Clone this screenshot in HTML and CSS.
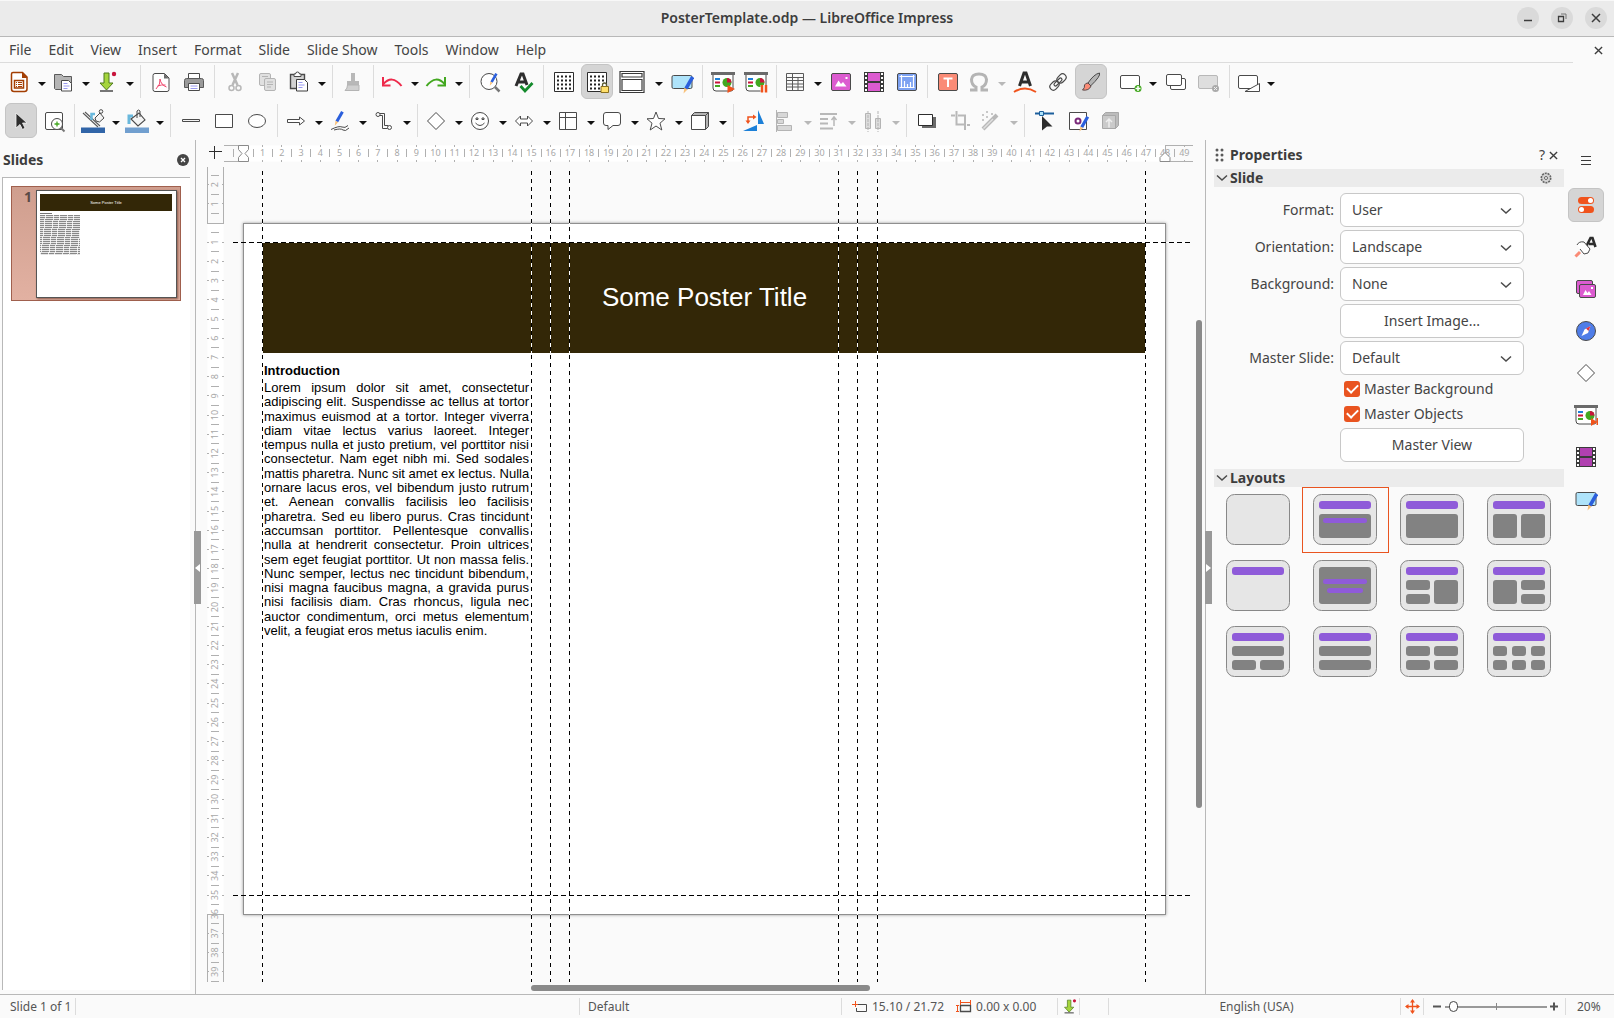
FILE: index.html
```html
<!DOCTYPE html>
<html lang="en">
<head>
<meta charset="utf-8">
<title>PosterTemplate.odp — LibreOffice Impress</title>
<link rel="stylesheet" href="styles.css">
</head>
<body>
<svg class="defs" width="0" height="0" aria-hidden="true">
  <symbol id="s-pencil" viewBox="0 0 14 20"><path d="M10.500 0 14 2 6.500 15 3 13z" fill="#2b5fdc"/><path d="M3 13l3.500 2L2 19.500z" fill="#f8c27c"/></symbol>
  <symbol id="s-chev" viewBox="0 0 12 8"><path d="M1 1.500l5 4.500 5-4.500" fill="none" stroke="#4a4a4a" stroke-width="1.500"/></symbol>
  <symbol id="s-x" viewBox="0 0 10 10"><path d="M1 1l8 8M9 1L1 9" fill="none" stroke="#3d3d3d" stroke-width="1.500"/></symbol>
  <symbol id="s-save" viewBox="0 0 24 24"><path d="M9 3h5v10h4l-6.500 7-6.500-7h4z" fill="#a5d53c" stroke="#4e7a1c"/><path d="M5 21h13" stroke="#4a4a4a" stroke-width="1.500"/><circle cx="19" cy="4" r="2.200" fill="#c8143c"/></symbol>
  <symbol id="s-show" viewBox="0 0 24 24"><path d="M2 4v14q0 3 3 3h15q2 0 2-2V4" fill="#fff" stroke="#4a4a4a"/><path d="M0 2h24v3H0z" fill="#6a6a6a"/><path d="M4 9h5" stroke="#1c80d8" stroke-width="2"/><path d="M4 12.500h5" stroke="#c8143c" stroke-width="2"/><path d="M4 16h5" stroke="#43a820" stroke-width="2"/><circle cx="16" cy="12.500" r="4.500" fill="#43a820"/><path d="M16 12.500V8a4.500 4.500 0 0 1 4.500 4.500z" fill="#c8143c"/></symbol>
  <symbol id="s-film" viewBox="0 0 24 24"><path d="M2 2h20v20H2z" fill="#3a3a3a"/><path d="M6 3h12v8H6zM6 13h12v8H6z" fill="var(--film)"/><path d="M4 3v19M20 3v19" stroke="#fff" stroke-width="2" stroke-dasharray="2 2"/></symbol>
  <symbol id="s-note" viewBox="0 0 24 24"><rect x="2" y="5.500" width="20" height="13" rx="1.500" fill="#aee3fa" stroke="#4a4a4a"/></symbol>
</svg>

<header class="titlebar">
  <h1>PosterTemplate.odp — LibreOffice Impress</h1>
  <div class="winbtns">
    <button aria-label="Minimize"><svg width="10" height="10"><path d="M1 7.500h8" stroke="#3d3d3d" stroke-width="1.500"/></svg></button>
    <button aria-label="Restore"><svg width="10" height="10"><path d="M1.500 3.500h5v5h-5z" fill="none" stroke="#3d3d3d" stroke-width="1.300"/><path d="M4 1h5v5" fill="none" stroke="#777"/></svg></button>
    <button aria-label="Close"><svg width="10" height="10"><use href="#s-x"/></svg></button>
  </div>
</header>

<nav class="menubar">
  <div class="menus">
    <button>File</button><button>Edit</button><button>View</button><button>Insert</button><button>Format</button><button>Slide</button><button>Slide Show</button><button>Tools</button><button>Window</button><button>Help</button>
  </div>
  <button class="docclose" aria-label="Close document"><svg width="9" height="9"><use href="#s-x"/></svg></button>
</nav>

<div class="toolbar">
  <span class="split"><button aria-label="New"><svg viewBox="0 0 24 24"><path d="M6 2.500h9.500l4.500 4.500V19q0 2.500-2.500 2.500H7Q4.500 21.500 4.500 19V4q0-1.500 1.500-1.500z" fill="#fff" stroke="#a33e03" stroke-width="1.500"/><path d="M15 2l5.500 6H15z" fill="#a33e03"/><path d="M7.500 10.500h9v7.500h-9z" fill="none" stroke="#a33e03" stroke-width="1.500"/><path d="M9 12.500h1M11 12.500h4M9 14.500h1M11 14.500h4M9 16.500h1M11 16.500h4" stroke="#a33e03"/></svg></button><button class="drop" aria-label="New options"></button></span>
  <span class="split"><button aria-label="Open"><svg viewBox="0 0 24 24"><path d="M3.500 18.500v-14h7l2 2h8v13h-16z" fill="#b4b4b4" stroke="#5a5a5a"/><path d="M10.500 10.500h7l3 3v7.500h-10z" fill="#fff" stroke="#4a4a4a"/><path d="M12.500 13.500h4M12.500 16h6M12.500 18.500h4" stroke="#9a9af0"/></svg></button><button class="drop" aria-label="Open options"></button></span>
  <span class="split"><button aria-label="Save"><svg viewBox="0 0 24 24"><use href="#s-save"/></svg></button><button class="drop" aria-label="Save options"></button></span>
  <i class="sep"></i>
  <button class="tb" aria-label="Export as PDF"><svg viewBox="0 0 24 24"><path d="M6 3.500h9.500l4.500 4.500v11.500q0 2-2 2H6q-2 0-2-2v-14q0-2 2-2z" fill="#fff" stroke="#4a4a4a"/><path d="M15 3.500V8.500h5z" fill="#6a6a6a"/><path d="M11 9q1 6 6.500 8M11 9q1 5-4 10M8.500 16q4-1.500 8-1" fill="none" stroke="#f0486e"/></svg></button>
  <button class="tb" aria-label="Print"><svg viewBox="0 0 24 24"><path d="M6.500 3.500h11v5h-11z" fill="#fff" stroke="#4a4a4a"/><path d="M2.500 10.500q0-2 2-2h15q2 0 2 2v7h-19z" fill="#9a9a9a" stroke="#5a5a5a"/><path d="M6.500 13.500h11v7h-11z" fill="#fff" stroke="#4a4a4a"/><path d="M8.500 16h7M8.500 18.500h7" stroke="#9a9af0"/></svg></button>
  <i class="sep"></i>
  <button class="tb" aria-label="Cut"><svg viewBox="0 0 24 24"><path d="M9 3l5.500 12M15 3L9.500 15" stroke="#b8b8b8" stroke-width="2.500" fill="none"/><circle cx="8.500" cy="18" r="2.500" fill="none" stroke="#b8b8b8" stroke-width="1.500"/><circle cx="15.500" cy="18" r="2.500" fill="none" stroke="#b8b8b8" stroke-width="1.500"/></svg></button>
  <button class="tb" aria-label="Copy"><svg viewBox="0 0 24 24"><g fill="#e0e0e0" stroke="#b4b4b4"><rect x="3.500" y="3.500" width="11" height="12" rx="1.500"/><rect x="8.500" y="8.500" width="11" height="12" rx="1.500"/></g><path d="M6 6.500h6M11 12h6M11 14.500h6M11 17h4" stroke="#b4b4b4"/></svg></button>
  <span class="split"><button aria-label="Paste"><svg viewBox="0 0 24 24"><path d="M3.500 4.500h14v14h-14z" fill="#d2d2d2" stroke="#4a4a4a" stroke-width="1.400"/><path d="M7 6.500V4h1.500q0-2 2-2t2 2H14v2.500z" fill="#fff" stroke="#4a4a4a"/><path d="M9.500 9.500h8l3 3v8.500h-11z" fill="#fff" stroke="#3a3a3a"/><path d="M11.500 12.500h4M11.500 15h6M11.500 17.500h4" stroke="#9a9af0"/></svg></button><button class="drop" aria-label="Paste options"></button></span>
  <i class="sep"></i>
  <button class="tb" aria-label="Clone formatting"><svg viewBox="0 0 24 24"><path d="M10 3h4v8h4v4H6v-4h4z" fill="#b8b8b8"/><path d="M6.500 15H18v5.500H4q2.500-2 2.500-5.500z" fill="#d0d0d0" stroke="#b4b4b4"/></svg></button>
  <i class="sep"></i>
  <span class="split"><button aria-label="Undo"><svg viewBox="0 0 24 24"><path d="M3 14.500Q12 4 21.500 16" fill="none" stroke="#ee2a4b" stroke-width="2"/><path d="M3 7v8.500H10.500" fill="none" stroke="#ee2a4b" stroke-width="2"/></svg></button><button class="drop" aria-label="Undo list"></button></span>
  <span class="split"><button aria-label="Redo"><svg viewBox="0 0 24 24"><path d="M21 14.500Q12 4 2.500 16" fill="none" stroke="#43a820" stroke-width="2"/><path d="M21 7v8.500H13.500" fill="none" stroke="#43a820" stroke-width="2"/></svg></button><button class="drop" aria-label="Redo list"></button></span>
  <i class="sep"></i>
  <button class="tb" aria-label="Find and replace"><svg viewBox="0 0 24 24"><circle cx="11" cy="11.500" r="8" fill="#fff" stroke="#4a4a4a"/><path d="M17 17l4.500 4.500" stroke="#777" stroke-width="2.500"/><use href="#s-pencil" x="9" y="3" width="12" height="13"/></svg></button>
  <button class="tb" aria-label="Spelling"><svg viewBox="0 0 24 24"><path d="M5 16L10 4h2l4 11M7 12h8" fill="none" stroke="#2d2d2d" stroke-width="3"/><path d="M9.500 16l4.500 5 7.500-8" fill="none" stroke="#148a2c" stroke-width="2.800"/></svg></button>
  <i class="sep"></i>
  <button class="tb" aria-label="Display grid"><svg viewBox="0 0 24 24"><path d="M2.500 2.500h19v19h-19z" fill="#fff" stroke="#2d2d2d"/><path d="M5 6.500h15M5 10.500h15M5 14.500h15M5 18.500h15" stroke="#222" stroke-width="2" stroke-dasharray="2 2"/></svg></button>
  <button class="tb on" aria-label="Snap to grid"><svg viewBox="0 0 24 24"><path d="M2.500 2.500h19v19h-19z" fill="#fff" stroke="#2d2d2d"/><path d="M5 6.500h15M5 10.500h15M5 14.500h12M5 18.500h11" stroke="#222" stroke-width="2" stroke-dasharray="2 2"/><path d="M17.500 17v-2q0-2 2-2t2 2v2" fill="none" stroke="#5a5a30" stroke-width="1.300"/><path d="M16 16.500h7.500v6H16z" fill="#ffdf6a" stroke="#8a7020"/></svg></button>
  <span class="split wide"><button aria-label="Display views"><svg viewBox="0 0 28 24"><path d="M2 1.500h24v21H2z" fill="#fff" stroke="#3a3a3a" stroke-width="1.200"/><path d="M4 3.500h20v3.500H4zM4 9.500h20v11H4z" fill="#fff" stroke="#3a3a3a" stroke-width="1.200"/></svg></button><button class="drop" aria-label="Views list"></button></span>
  <button class="tb" aria-label="Master slide"><svg viewBox="0 0 24 24"><use href="#s-note"/><use href="#s-pencil" x="11" y="6" width="14" height="18"/></svg></button>
  <i class="sep"></i>
  <button class="tb" aria-label="Start from first slide"><svg viewBox="0 0 24 24"><use href="#s-show"/><path d="M16.500 15l7.500 4-7.500 4z" fill="#f0531c"/></svg></button>
  <button class="tb" aria-label="Start from current slide"><svg viewBox="0 0 24 24"><use href="#s-show"/><path d="M16.500 15v8h6v-8z" fill="#fff"/><path d="M18 15v7.500M22 15v7.500" stroke="#f0531c" stroke-width="2.500"/></svg></button>
  <i class="sep"></i>
  <span class="split"><button aria-label="Table"><svg viewBox="0 0 24 24"><path d="M3.500 3.500h17v17h-17zM3.500 7.500h17M3.500 10.500h17M3.500 14h17M3.500 17h17M9.500 3.500v17M15 7.500v13" fill="none" stroke="#5a5a5a"/></svg></button><button class="drop" aria-label="Table size"></button></span>
  <button class="tb" aria-label="Insert image"><svg viewBox="0 0 24 24"><rect x="2.500" y="3.500" width="19" height="17" rx="1.500" fill="#dc5bd0" stroke="#4a4a4a"/><path d="M6 16.500l3.500-6 2.500 3.500 2-2 3.500 4.500zM16.500 7h2v2h-2z" fill="#fff"/></svg></button>
  <button class="tb film" aria-label="Insert audio or video"><svg viewBox="0 0 24 24"><use href="#s-film"/></svg></button>
  <button class="tb" aria-label="Insert chart"><svg viewBox="0 0 24 24"><rect x="2.500" y="3.500" width="19" height="17" rx="1.500" fill="#7da2f2" stroke="#4a4a4a"/><path d="M6.500 5v13M4.500 6.500h15M4.500 17.500h15M18.500 5v13M9.500 17v-6M12.500 17v-3M15.500 17v-5" fill="none" stroke="#fff" stroke-width="1.200"/></svg></button>
  <i class="sep"></i>
  <button class="tb" aria-label="Insert text box"><svg viewBox="0 0 24 24"><rect x="2.500" y="3.500" width="19" height="17" rx="1.500" fill="#fa8b76" stroke="#4a4a4a"/><path d="M7.500 8.500h9M12 8v9" stroke="#fff" stroke-width="2"/></svg></button>
  <span class="split off"><button aria-label="Special character"><svg viewBox="0 0 24 24"><path d="M3 20h6v-3Q4.500 15 4.500 9.500 5 4 12 4t7.500 5.500Q19.500 15 15 17v3h6" fill="none" stroke="#b4b4b4" stroke-width="3"/></svg></button><button class="drop" aria-label="Character list"></button></span>
  <button class="tb" aria-label="Fontwork"><svg viewBox="0 0 24 24"><path d="M6.500 16L11 3h2l4.500 13M8.500 12h7" fill="none" stroke="#2d2d2d" stroke-width="3"/><path d="M1 22q11-7 22 0" fill="none" stroke="#f0531c" stroke-width="2"/></svg></button>
  <button class="tb" aria-label="Hyperlink"><svg viewBox="0 0 24 24"><g fill="none" stroke="#4a4a4a" stroke-width="1.200" transform="rotate(-45 12 12)"><rect x="2" y="8.500" width="10" height="7" rx="3.500"/><rect x="12" y="8.500" width="10" height="7" rx="3.500"/><rect x="7" y="10.500" width="10" height="3" rx="1.500"/></g></svg></button>
  <button class="tb on" aria-label="Show draw functions"><svg viewBox="0 0 24 24"><path d="M9 13Q15 4 20.500 3q1.500 3-9 13z" fill="#b4b4b4" stroke="#4a4a4a"/><path d="M9 13l3 3q-2 5-8.500 4 2.500-2 2-5 1-2 3.500-2z" fill="#fa8b76" stroke="#5a4a4a"/></svg></button>
  <i class="gapsep"></i>
  <span class="split"><button aria-label="New slide"><svg viewBox="0 0 24 24"><rect x="2.500" y="5.500" width="19" height="13" rx="1.500" fill="#fff" stroke="#4a4a4a"/><circle cx="20" cy="18.500" r="3.500" fill="#43a820"/><path d="M17.500 18.500h5M20 16v5" stroke="#fff" stroke-width="1.500"/></svg></button><button class="drop" aria-label="New slide layout"></button></span>
  <button class="tb" aria-label="Duplicate slide"><svg viewBox="0 0 24 24"><g fill="#fff" stroke="#4a4a4a"><rect x="6.500" y="8.500" width="15" height="11" rx="1.500"/><rect x="2.500" y="4.500" width="15" height="11" rx="1.500"/></g></svg></button>
  <button class="tb" aria-label="Delete slide"><svg viewBox="0 0 24 24"><rect x="1.500" y="5.500" width="19" height="13" rx="1.500" fill="#dedede" stroke="#b8b8b8"/><circle cx="18.500" cy="18.500" r="3.500" fill="#aaa"/><path d="M17 17l3 3M20 17l-3 3" stroke="#eee"/></svg></button>
  <i class="sep"></i>
  <span class="split"><button aria-label="Slide layout"><svg viewBox="0 0 24 24"><rect x="2.500" y="5.500" width="19" height="13" rx="1.500" fill="#fff" stroke="#4a4a4a"/><path d="M9 21.500h14.500v-8z" fill="#fff" stroke="#4a4a4a"/></svg></button><button class="drop" aria-label="Layout list"></button></span>
</div>

<div class="toolbar second">
  <button class="tb on" aria-label="Select"><svg viewBox="0 0 24 24"><path d="M7 4v15l4-3.500 2.500 5 2.500-1.500-2.500-5h4.500z" fill="#2d2d2d" stroke="#f5f5f5" stroke-width=".8"/></svg></button>
  <button class="tb" aria-label="Zoom and pan"><svg viewBox="0 0 24 24"><rect x="3.500" y="3.500" width="17" height="17" rx="1.500" fill="#fff" stroke="#4a4a4a"/><path d="M18.500 18.500l4 4" stroke="#777" stroke-width="2"/><circle cx="15" cy="15" r="5.500" fill="#fff" stroke="#4a4a4a"/><path d="M12.500 15h5M15 12.500v5" stroke="#43a820" stroke-width="1.300"/></svg></button>
  <i class="sep"></i>
  <span class="split"><button aria-label="Line color"><svg viewBox="0 0 24 24"><path d="M2 4l15 14M4 3l15 14" stroke="#5a5a5a" stroke-width="1.100"/><path d="M10.500 11V5h3.500" fill="none" stroke="#69b8dc" stroke-width="2.500"/><path d="M14 9l5-5 4 5-4.500 4-3.500-1z" fill="#f4f4f4" stroke="#4a4a4a"/><circle cx="20" cy="2.500" r="1.800" fill="none" stroke="#4a4a4a"/><path d="M0 18.500h24v5.500H0z" fill="#3165a8"/></svg></button><button class="drop" aria-label="Line colors"></button></span>
  <span class="split"><button aria-label="Fill color"><svg viewBox="0 0 24 24"><path d="M4 15V7h4" fill="none" stroke="#69b8dc" stroke-width="3"/><path d="M6 10l8-6 6 7-7 6z" fill="#f4f4f4" stroke="#4a4a4a" stroke-width="1.100"/><path d="M12 9V2q1.500-2 3 0v6" fill="none" stroke="#4a4a4a"/><path d="M0 18.500h24v5.500H0z" fill="#719fcf"/></svg></button><button class="drop" aria-label="Fill colors"></button></span>
  <i class="sep"></i>
  <button class="tb" aria-label="Insert line"><svg viewBox="0 0 24 24"><path d="M3.500 10.500h17v2h-17z" fill="#f4f4f4" stroke="#4a4a4a"/></svg></button>
  <button class="tb" aria-label="Rectangle"><svg viewBox="0 0 24 24"><path d="M3.500 5.500h17v13h-17z" fill="#fff" stroke="#4a4a4a"/></svg></button>
  <button class="tb" aria-label="Ellipse"><svg viewBox="0 0 24 24"><ellipse cx="12" cy="12" rx="8.500" ry="6.500" fill="#fff" stroke="#4a4a4a"/></svg></button>
  <i class="sep"></i>
  <span class="split"><button aria-label="Lines and arrows"><svg viewBox="0 0 24 24"><path d="M3.500 10.500h12V8l5 4-5 4v-2.500h-12z" fill="#fff" stroke="#4a4a4a"/></svg></button><button class="drop" aria-label="Arrow list"></button></span>
  <span class="split"><button aria-label="Curves and polygons"><svg viewBox="0 0 24 24"><use href="#s-pencil" x="3" y="2" width="15" height="15"/><path d="M3 20.500q8-4 11-2.500t6-1.500M6 21q7-2 9 0t6-2" fill="none" stroke="#4a4a4a"/></svg></button><button class="drop" aria-label="Curve list"></button></span>
  <span class="split"><button aria-label="Connectors"><svg viewBox="0 0 24 24"><circle cx="6" cy="5.500" r="2" fill="none" stroke="#4a4a4a"/><circle cx="17.500" cy="18.500" r="2" fill="none" stroke="#4a4a4a"/><path d="M8 4.500h4.500v12h3.500M8 6.500h2.500v13h5" fill="none" stroke="#4a4a4a"/></svg></button><button class="drop" aria-label="Connector list"></button></span>
  <i class="sep"></i>
  <span class="split"><button aria-label="Basic shapes"><svg viewBox="0 0 24 24"><path d="M12 3.500l8.500 8.500-8.500 8.500L3.500 12z" fill="#fff" stroke="#4a4a4a"/></svg></button><button class="drop" aria-label="Basic shape list"></button></span>
  <span class="split"><button aria-label="Symbol shapes"><svg viewBox="0 0 24 24"><circle cx="12" cy="12" r="8.500" fill="#fff" stroke="#4a4a4a"/><path d="M8 9h2v1.500H8zM14 9h2v1.500h-2z" fill="none" stroke="#4a4a4a"/><path d="M7.500 14q4.500 5 9 0" fill="none" stroke="#4a4a4a"/></svg></button><button class="drop" aria-label="Symbol shape list"></button></span>
  <span class="split"><button aria-label="Block arrows"><svg viewBox="0 0 24 24"><path d="M3.500 12l5-5v3h7V7l5 5-5 5v-3h-7v3z" fill="#fff" stroke="#4a4a4a"/></svg></button><button class="drop" aria-label="Block arrow list"></button></span>
  <span class="split"><button aria-label="Flowchart"><svg viewBox="0 0 24 24"><path d="M3.500 3.500h17v17h-17zM9.500 3.500v17M3.500 8.500h17" fill="#fff" stroke="#4a4a4a"/></svg></button><button class="drop" aria-label="Flowchart list"></button></span>
  <span class="split"><button aria-label="Callouts"><svg viewBox="0 0 24 24"><path d="M6 3.500h12q2.500 0 2.500 2.500v8q0 2.500-2.500 2.500h-5l-5 4v-4H6q-2.500 0-2.500-2.500V6q0-2.500 2.500-2.500z" fill="#fff" stroke="#4a4a4a"/></svg></button><button class="drop" aria-label="Callout list"></button></span>
  <span class="split"><button aria-label="Stars and banners"><svg viewBox="0 0 24 24"><path d="M12 3l2.500 6.500 6.500.300-5 4.400 1.800 6.800L12 17l-5.800 4L8 14.200 3 9.800l6.500-.300z" fill="#fff" stroke="#4a4a4a"/></svg></button><button class="drop" aria-label="Star list"></button></span>
  <span class="split"><button aria-label="3D objects"><svg viewBox="0 0 24 24"><path d="M3.500 6.500l3-3h14v14l-3 3z" fill="#b4b4b4" stroke="#4a4a4a"/><path d="M3.500 6.500h14v14h-14z" fill="#fff" stroke="#4a4a4a"/><path d="M17.500 6.500l3-3" stroke="#4a4a4a"/></svg></button><button class="drop" aria-label="3D object list"></button></span>
  <i class="sep"></i>
  <button class="tb" aria-label="Rotate"><svg viewBox="0 0 24 24"><path d="M16 1l6 14h-6zM1 22l14-6v6z" fill="#1c80d8"/><path d="M6 13V8h7" fill="none" stroke="#f0531c" stroke-width="1.500"/><path d="M3.500 11.500h5L6 15zM11 5.500v5l3.500-2.500z" fill="#f0531c"/></svg></button>
  <span class="split off"><button aria-label="Align objects"><svg viewBox="0 0 24 24"><path d="M3.500 1v22" stroke="#b4b4b4"/><path d="M4.500 3.500h10v5h-10zM4.500 10.500h6v4h-6zM4.500 16.500h14v5h-14z" fill="#d8d8d8" stroke="#b4b4b4"/></svg></button><button class="drop" aria-label="Align list"></button></span>
  <span class="split off"><button aria-label="Arrange"><svg viewBox="0 0 24 24"><path d="M3 5h17M3 10h8M3 14.500h8M3 19.500h13" stroke="#b8b8b8" stroke-width="2"/><path d="M17 17V9M14.500 11l2.500-3 2.500 3" fill="none" stroke="#b8b8b8" stroke-width="1.500"/></svg></button><button class="drop" aria-label="Arrange list"></button></span>
  <span class="split off"><button aria-label="Distribute"><svg viewBox="0 0 24 24"><path d="M4.500 4.500h5v15h-5zM14.500 9.500h5v10h-5z" fill="#dcdcdc" stroke="#b4b4b4"/><path d="M7 2v21M17 2v21" stroke="#b4b4b4" stroke-dasharray="3 1"/></svg></button><button class="drop" aria-label="Distribute list"></button></span>
  <i class="sep"></i>
  <button class="tb" aria-label="Shadow"><svg viewBox="0 0 24 24"><path d="M7 8h14v11H7z" fill="#6a6a6a"/><path d="M3.500 5.500h14v11h-14z" fill="#fff" stroke="#2d2d2d"/></svg></button>
  <button class="tb" aria-label="Crop image"><svg viewBox="0 0 24 24"><path d="M3 6.500h4M8.500 2v13.500h9M10 6.500h7V21M19 16h3" fill="none" stroke="#b8b8b8" stroke-width="2"/></svg></button>
  <span class="split off"><button aria-label="Filter"><svg viewBox="0 0 24 24"><path d="M4 20L18 6" stroke="#b8b8b8" stroke-width="4"/><path d="M4.500 19.500L14 10" stroke="#e0e0e0" stroke-width="1.500"/><path d="M3 6h2M7 3h2M7 8h2M12 5h2M3 11h2" stroke="#b8b8b8" stroke-width="1.500"/></svg></button><button class="drop" aria-label="Filter list"></button></span>
  <i class="sep"></i>
  <button class="tb" aria-label="Edit points"><svg viewBox="0 0 24 24"><path d="M2 4.500h19" stroke="#1c5f9c" stroke-width="2"/><path d="M6.500 2.500h4v4h-4z" fill="#aee3fa" stroke="#1c5f9c"/><path d="M9 7l10.500 10.500h-5.500l-5 4z" fill="#2d2d2d"/></svg></button>
  <button class="tb" aria-label="Glue points"><svg viewBox="0 0 24 24"><path d="M3.500 3.500h17v17h-17z" fill="#fff" stroke="#4a4a4a"/><circle cx="12" cy="12" r="2.500" fill="none" stroke="#7a2a7a" stroke-width="2"/><use href="#s-pencil" x="11" y="7" width="13" height="16"/></svg></button>
  <button class="tb" aria-label="Toggle extrusion"><svg viewBox="0 0 24 24"><path d="M3.500 6.500l3-3h13v13l-3 3z" fill="#bcbcbc" stroke="#a8a8a8"/><path d="M3.500 6.500h13v13h-13z" fill="#cacaca" stroke="#a8a8a8"/><path d="M10 18.500v-8M7 13l3-3 3 3" fill="none" stroke="#eee" stroke-width="1.500"/></svg></button>
</div>

<main class="workarea">
  <aside class="slides">
    <div class="slides-head"><h2>Slides</h2><button aria-label="Close pane"><svg width="12" height="12"><circle cx="6" cy="6" r="6" fill="#454545"/><path d="M4 4l4 4M8 4l-4 4" stroke="#fff" stroke-width="1.300"/></svg></button></div>
    <div class="slide-list">
      <div class="thumb"><span class="num">1</span>
        <div class="mini"><div class="mini-title">Some Poster Title</div><div class="mini-h"></div><div class="mini-body"></div></div>
      </div>
    </div>
    <button class="grip left" aria-label="Hide slide pane"></button>
  </aside>

  <section class="editor">
    <svg class="corner" width="13" height="13"><path d="M0 5.500h13M5.500 0v13" stroke="#2d2d2d"/></svg>
    <svg class="hruler" id="hruler"></svg>
    <svg class="vruler" id="vruler"></svg>
    <div class="canvas">
      <article class="page">
        <h2 class="poster-title">Some Poster Title</h2>
        <div class="column">
          <h3>Introduction</h3>
          <p>
            <span>Lorem ipsum dolor sit amet, consectetur</span>
            <span>adipiscing elit. Suspendisse ac tellus at tortor</span>
            <span>maximus euismod at a tortor. Integer viverra</span>
            <span>diam vitae lectus varius laoreet. Integer</span>
            <span>tempus nulla et justo pretium, vel porttitor nisi</span>
            <span>consectetur. Nam eget nibh mi. Sed sodales</span>
            <span>mattis pharetra. Nunc sit amet ex lectus. Nulla</span>
            <span>ornare lacus eros, vel bibendum justo rutrum</span>
            <span>et. Aenean convallis facilisis leo facilisis</span>
            <span>pharetra. Sed eu libero purus. Cras tincidunt</span>
            <span>accumsan porttitor. Pellentesque convallis</span>
            <span>nulla at hendrerit consectetur. Proin ultrices</span>
            <span>sem eget feugiat porttitor. Ut non massa felis.</span>
            <span>Nunc semper, lectus nec tincidunt bibendum,</span>
            <span>nisi magna faucibus magna, a gravida purus</span>
            <span>nisi facilisis diam. Cras rhoncus, ligula nec</span>
            <span>auctor condimentum, orci metus elementum</span>
            <span>velit, a feugiat eros metus iaculis enim.</span>
          </p>
        </div>
      </article>
      <i class="guide v" style="left:38px"></i>
      <i class="guide v" style="left:307px"></i>
      <i class="guide v" style="left:326px"></i>
      <i class="guide v" style="left:345px"></i>
      <i class="guide v" style="left:614px"></i>
      <i class="guide v" style="left:633px"></i>
      <i class="guide v" style="left:653px"></i>
      <i class="guide v" style="left:921px"></i>
      <i class="guide h" style="top:80px"></i>
      <i class="guide h" style="top:733px"></i>
    </div>
    <div class="vscroll"><i></i></div>
    <div class="hscroll"><i></i></div>
  </section>

  <aside class="sidebar">
    <button class="grip right" aria-label="Hide sidebar"></button>
    <div class="deck">
      <div class="deck-head">
        <svg width="9" height="15"><g fill="#5a5a5a"><circle cx="2" cy="2" r="1.500"/><circle cx="7" cy="2" r="1.500"/><circle cx="2" cy="7" r="1.500"/><circle cx="7" cy="7" r="1.500"/><circle cx="2" cy="12" r="1.500"/><circle cx="7" cy="12" r="1.500"/></g></svg>
        <h2>Properties</h2>
        <button>?</button>
        <button aria-label="Close sidebar"><svg width="9" height="9"><use href="#s-x"/></svg></button>
      </div>
      <div class="bar"><svg width="12" height="8"><use href="#s-chev"/></svg><h3>Slide</h3><button aria-label="More options"><svg width="12" height="12" viewBox="0 0 12 12"><circle cx="6" cy="6" r="4.700" fill="#d4d4d4" stroke="#666" stroke-width="1.600" stroke-dasharray="2 .9"/><circle cx="6" cy="6" r="1.500" fill="#fff" stroke="#666"/></svg></button></div>
      <form class="props">
        <label for="format">Format:</label>
        <div class="sel"><select id="format"><option>User</option></select><svg width="12" height="8"><use href="#s-chev"/></svg></div>
        <label for="orient">Orientation:</label>
        <div class="sel"><select id="orient"><option>Landscape</option></select><svg width="12" height="8"><use href="#s-chev"/></svg></div>
        <label for="bg">Background:</label>
        <div class="sel"><select id="bg"><option>None</option></select><svg width="12" height="8"><use href="#s-chev"/></svg></div>
        <button type="button" class="push">Insert Image...</button>
        <label for="master">Master Slide:</label>
        <div class="sel"><select id="master"><option>Default</option></select><svg width="12" height="8"><use href="#s-chev"/></svg></div>
        <div class="checks">
          <label><input type="checkbox" checked>Master Background</label>
          <label><input type="checkbox" checked>Master Objects</label>
        </div>
        <button type="button" class="push">Master View</button>
      </form>
      <div class="bar"><svg width="12" height="8"><use href="#s-chev"/></svg><h3>Layouts</h3></div>
      <div class="layouts" id="layouts"></div>
    </div>
    <div class="tabs">
      <button class="menu" aria-label="Sidebar settings"><svg width="12" height="12"><path d="M1 2.500h10M1 6.500h10M1 10.500h10" stroke="#3a3a3a"/></svg></button>
      <button class="on" aria-label="Properties"><svg viewBox="0 0 24 24"><rect x="4" y="4" width="16" height="7" rx="3.500" fill="#f0531c"/><rect x="4" y="13" width="16" height="7" rx="3.500" fill="#f0531c"/><circle cx="16.500" cy="7.500" r="2.500" fill="#fff"/><circle cx="7.500" cy="16.500" r="2.500" fill="#fff"/></svg></button>
      <button aria-label="Styles"><svg viewBox="0 0 24 24"><path d="M12 12L16.500 3h2l3 9M15 9h6" fill="none" stroke="#2d2d2d" stroke-width="2.600"/><path d="M3 10q2-4 7-3l6 7-2 4-4 1-4-5" fill="#fff" stroke="#4a4a4a"/><path d="M1.500 21.500L6 17" stroke="#fa8b76" stroke-width="3"/></svg></button>
      <button aria-label="Gallery"><svg viewBox="0 0 24 24"><rect x="2.500" y="3.500" width="16" height="13" rx="1.500" fill="#dc5bd0" stroke="#4a4a4a"/><rect x="5.500" y="7.500" width="16" height="13" rx="1.500" fill="#dc5bd0" stroke="#4a4a4a"/><path d="M9 18l2.500-5 2 3 1.500-2 2.500 4zM17 10h2v2h-2z" fill="#fff"/></svg></button>
      <button aria-label="Navigator"><svg viewBox="0 0 24 24"><circle cx="12" cy="12" r="9.500" fill="#4f7de8" stroke="#4a4a4a"/><path d="M16.500 7l-2.500 7-6.500 3 3-6.500z" fill="#fff"/><path d="M16.500 7l-2 5-2.500-2.500z" fill="#e03040"/></svg></button>
      <button aria-label="Shapes"><svg viewBox="0 0 24 24"><path d="M12 3.500l8.500 8.500-8.500 8.500L3.500 12z" fill="#fff" stroke="#4a4a4a"/></svg></button>
      <button aria-label="Slide transition"><svg viewBox="0 0 24 24"><use href="#s-show"/><path d="M17 15l6 4-6 4zM22.500 15h1.500v7h-1.500z" fill="#f0531c"/></svg></button>
      <button class="anim" aria-label="Animation"><svg viewBox="0 0 24 24"><use href="#s-film"/></svg></button>
      <button aria-label="Master slides"><svg viewBox="0 0 24 24"><use href="#s-note"/><use href="#s-pencil" x="11" y="6" width="14" height="18"/></svg></button>
    </div>
  </aside>
</main>

<footer class="status">
  <span class="s-slide">Slide 1 of 1</span>
  <span class="s-blank"></span>
  <span class="s-master">Default</span>
  <span class="s-pos"><svg width="16" height="14"><path d="M5 4.500h9.500v7h-10V8" fill="none" stroke="#4a4a4a"/><path d="M0 4.500h6M3.500 1v6" stroke="#f0531c"/></svg>15.10 / 21.72<svg class="size" width="16" height="14"><path d="M4.500 5.500h10v6h-10z" fill="none" stroke="#4a4a4a" stroke-width="1.300"/><path d="M4 2.500h11M4.500 0v5M14.500 0v5M1.500 5v7M0 5.500h3M0 11.500h3" stroke="#f0531c"/></svg>0.00 x 0.00</span>
  <span class="s-save"><svg width="17" height="17"><use href="#s-save"/></svg></span>
  <span class="s-sign"></span>
  <span class="s-lang">English (USA)</span>
  <span class="s-fit"><svg width="15" height="15" viewBox="0 0 15 15"><path d="M7.500 1v13M1 7.500h13" stroke="#f0531c" stroke-width="1.300"/><path d="M5 3.500L7.500 0 10 3.500zM5 11.500L7.500 15l2.500-3.500zM3.500 5L0 7.500 3.500 10zM11.500 5L15 7.500 11.500 10z" fill="#f0531c"/></svg></span>
  <span class="s-zoom"><button aria-label="Zoom out"><svg width="9" height="9"><path d="M0 4.500h8" stroke="#555" stroke-width="2"/></svg></button><input type="range" min="0" max="100" value="4" aria-label="Zoom"><button aria-label="Zoom in"><svg width="9" height="9"><path d="M0 4.500h8M4 .5v8" stroke="#555" stroke-width="2"/></svg></button></span>
  <span class="s-pct">20%</span>
</footer>
<script src="app.js"></script>
</body>
</html>
```

FILE: styles.css
```css
* { box-sizing: border-box; }
html, body { height: 100%; }
body {
  margin: 0;
  display: flex;
  flex-direction: column;
  background: #fafafa;
  color: #444;
  font: 14px/18px "Noto Sans", "Open Sans", sans-serif;
  overflow: hidden;
}
h1, h2, h3, p { margin: 0; }
button {
  padding: 0;
  border: 0;
  background: none;
  color: inherit;
  font: inherit;
  display: flex;
  align-items: center;
  justify-content: center;
}
svg { display: block; flex: none; }
.defs { position: absolute; }

/* window frame */
.titlebar {
  flex: none;
  height: 37px;
  display: grid;
  grid-template-columns: 1fr auto 1fr;
  align-items: center;
  background: #ebebeb;
  border-top: 1px solid #f8f8f8;
  border-bottom: 1px solid #b8b8b8;
}
.titlebar h1 { grid-column: 2; font-size: 14px; font-weight: 600; color: #3d3d3d; padding-bottom: 2px; }
.winbtns { display: flex; justify-content: flex-end; gap: 12px; padding: 0 7px 1px 0; }
.winbtns button { width: 22px; height: 22px; border-radius: 50%; background: #dadada; }
.menubar { flex: none; height: 26px; display: flex; }
.menus { flex: 1; display: flex; gap: 17px; padding-left: 9px; border-bottom: 1px solid #dcdcdc; }
.docclose { width: 41px; padding-left: 9px; }

/* toolbars */
.toolbar { flex: none; height: 39px; display: flex; gap: 1px; padding: 1px 5px; }
.toolbar.second { height: 38px; }
.toolbar svg { width: 24px; height: 24px; }
.tb { width: 32px; height: 35px; border: 1px solid transparent; border-radius: 6px; }
.tb.on, .tabs .on { background: #d5d5d5; border: 1px solid #c4c4c4; }
.split { display: flex; width: 43px; height: 35px; }
.split button { width: 28px; }
.split .drop { width: 17px; margin-right: -2px; }
.drop::after { content: ""; border: 4px solid transparent; border-top-color: #111; border-bottom: 0; margin-top: 4px; }
.split.off .drop::after { border-top-color: #b8b8b8; }
.split.wide { width: 51px; }
.split.wide button { width: 36px; }
.split.wide .drop { width: 17px; }
.split.wide svg { width: 28px; }
.sep { width: 7px; height: 33px; margin-top: 1px; background: linear-gradient(#dcdcdc, #dcdcdc) center / 1px 100% no-repeat; }
.gapsep { width: 7px; }
.film { --film: #dc5bd0; }
.anim { --film: #b040b0; }

/* work area */
.workarea { flex: 1; min-height: 0; display: flex; border-bottom: 1px solid #b8b8b8; }
.slides {
  position: relative;
  width: 196px;
  flex: none;
  display: flex;
  flex-direction: column;
  padding: 2px 5px 4px 2px;
  border-right: 1px solid #b8b8b8;
}
.slides-head { height: 35px; display: flex; align-items: center; justify-content: space-between; padding: 0 1px; }
.slides-head h2, .deck-head h2, .bar h3 { font-size: 14px; font-weight: 700; color: #3d3d3d; }
.slide-list { flex: 1; background: #fff; border: solid #b8b8b8; border-width: 1px 0 0 1px; padding: 8px; }
.thumb {
  display: flex;
  width: 170px;
  height: 115px;
  padding: 3px;
  border: 1px solid #a0604e;
  background: linear-gradient(#cf9e8e, #e2b1a2);
}
.num { width: 21px; text-align: right; font-weight: 700; color: #5a4a46; padding-right: 4px; line-height: 14px; }
.mini { width: 141px; height: 108px; background: #fff; border: 1px solid #555; padding: 3px; box-shadow: 1px 1px 2px #8a5a4c; }
.mini-title { width: 132px; height: 17px; background: #332707; color: #fff; font: 4px/17px "Liberation Sans", Arial, sans-serif; text-align: center; }
.mini-h { width: 12px; height: 1px; margin: 2px 0 1px; background: #777; }
.mini-body { width: 40px; height: 40px; background: repeating-linear-gradient(97deg, transparent 0 5px, rgba(255,255,255,.8) 5px 6px, transparent 6px 13px, rgba(255,255,255,.8) 13px 14px), repeating-linear-gradient(#888 0 1px, #e4e4e4 1px 2px); }
.grip { position: absolute; top: 50%; width: 7px; height: 73px; margin-top: -36px; background: #999; }
.grip.left { right: -6px; }
.grip.right { left: -1px; }
.grip::after { content: ""; border: 4px solid transparent; }
.grip.left::after { border-left: 0; border-right: 5px solid #fff; }
.grip.right::after { border-right: 0; border-left: 5px solid #fff; }

.editor {
  flex: 1;
  min-width: 0;
  display: grid;
  grid-template-columns: 17px minmax(0, 1fr) 6px;
  grid-template-rows: 17px minmax(0, 1fr) 6px;
  padding: 5px 3px 3px 11px;
}
.corner { margin: 1px 0 0 2px; }
.hruler, .vruler { width: 100%; height: 100%; font: 9px "Noto Sans", sans-serif; }
.hruler { padding-right: 3px; grid-area: 1 / 2; }
.vruler { padding: 5px 0 3px; grid-area: 2 / 1; }
.canvas { grid-area: 2 / 2; position: relative; overflow: hidden; margin: 0 3px 3px 0; }
.vscroll { grid-area: 2 / 3; display: flex; flex-direction: column; padding: 158px 0 177px; }
.hscroll { grid-area: 3 / 2; display: flex; padding: 0 326px 0 307px; }
.vscroll i, .hscroll i { flex: 1; background: #8a8a8a; border-radius: 3px; }
.page {
  position: absolute;
  left: 19px;
  top: 61px;
  width: 923px;
  height: 692px;
  padding: 19px 19px 0 19px;
  background: #fff;
  border: 1px solid #8f8f8f;
  box-shadow: 0 0 3px #999;
  color: #000;
  font: 13px "Liberation Sans", Arial, sans-serif;
}
.poster-title {
  height: 110px;
  background: #332707;
  color: #fff;
  font-size: 26px;
  line-height: 109px;
  font-weight: 400;
  text-align: center;
}
.column { width: 266px; padding: 11px 0 0 1px; }
.column h3 { font-size: 13px; line-height: 14px; }
.column p { margin-top: 3px; line-height: 1.1; }
.column span { display: block; white-space: nowrap; text-align: justify; text-align-last: justify; }
.column span:last-child { text-align-last: left; }
.guide { position: absolute; }
.guide.v { top: 9px; bottom: 0; width: 1px; background: repeating-linear-gradient(#000 0 4px, #fff 4px 8px); }
.guide.h { left: 9px; right: 3px; height: 1px; background: repeating-linear-gradient(90deg, #000 0 5px, #fff 5px 8px); }

/* sidebar */
.sidebar { position: relative; flex: none; width: 409px; display: flex; border-left: 1px solid #b8b8b8; padding-right: 9px; }
.deck { width: 362px; padding: 0 4px 0 8px; }
.deck-head { height: 29px; display: flex; align-items: center; padding: 1px 6px 0 1px; }
.deck-head h2 { flex: 1; padding-left: 6px; }
.deck-head button + button { margin-left: 4px; }
.bar { height: 18px; display: flex; align-items: center; background: #ebebeb; padding: 0 12px 0 2px; }
.bar h3 { flex: 1; padding-left: 2px; }
.props { display: grid; grid-template-columns: 1fr 184px; gap: 3px 6px; padding: 6px 40px 7px 0; }
.props > label { text-align: right; line-height: 34px; }
.sel { position: relative; }
.sel select { appearance: none; width: 100%; height: 34px; padding: 0 11px; }
.sel select, .push { background: #fff; border: 1px solid #c8c8c8; border-radius: 6px; font: inherit; color: inherit; }
.sel svg { position: absolute; right: 12px; top: 14px; pointer-events: none; }
.push, .checks { grid-column: 2; }
.push { height: 34px; }
.checks { display: flex; flex-direction: column; gap: 9px; padding: 3px 4px; }
.checks label { display: flex; align-items: center; gap: 4px; height: 16px; white-space: nowrap; }
.checks input { appearance: none; width: 16px; height: 16px; margin: 0; border-radius: 3px; background: #e95420; display: grid; place-items: center; }
.checks input::before { content: ""; width: 9px; height: 5px; margin-top: -3px; border: solid #fff; border-width: 0 0 2px 2px; transform: rotate(-45deg); }
.layouts { display: grid; grid-template-columns: repeat(4, 87px); grid-auto-rows: 66px; margin-left: 1px; }
.layouts button { border: 1px solid transparent; padding: 0 2px 2px 0; }
.layouts .picked { border-color: #e95420; }
.tabs { display: flex; flex-direction: column; gap: 8px; }
.tabs button { width: 36px; height: 34px; border-radius: 6px; }
.tabs .menu { height: 40px; }
.tabs svg { width: 24px; height: 24px; }
.tabs .menu svg { width: 12px; height: 12px; }

/* status bar */
.status { flex: none; height: 23px; display: flex; align-items: center; font-size: 12px; color: #555; padding: 3px 0; }
.status > span { height: 17px; display: flex; align-items: center; border-right: 1px solid #dcdcdc; white-space: nowrap; }
.status .s-slide { width: 76px; padding-left: 10px; }
.status .s-blank { flex: 1; }
.status .s-master { width: 262px; padding-left: 8px; }
.status .s-pos { width: 216px; padding-left: 10px; gap: 4px; }
.status .s-pos .size { margin-left: 8px; }
.status .s-save { width: 22px; padding-left: 3px; }
.status .s-sign { width: 29px; }
.status .s-lang { width: 292px; justify-content: center; padding-left: 4px; }
.status .s-fit { width: 23px; justify-content: center; }
.status .s-zoom { width: 142px; padding: 0 6px 0 9px; gap: 3px; }
.status .s-pct { width: 48px; padding-left: 11px; border-right: 0; }
.s-zoom input {
  appearance: none;
  flex: 1;
  min-width: 0;
  height: 15px;
  margin: 0;
  background: linear-gradient(#888, #888) center / 1px 7px no-repeat, linear-gradient(#999, #999) center / 100% 2px no-repeat;
}
.s-zoom input::-webkit-slider-thumb { appearance: none; width: 9px; height: 11px; border: 1px solid #444; border-radius: 5px; background: #fff; }
```

FILE: app.js
```js
const NS = 'http://www.w3.org/2000/svg';
const CM = 19.2; // pixels per centimetre at 20% zoom

function add(parent, name, attrs, text) {
  const el = document.createElementNS(NS, name);
  for (const key in attrs) el.setAttribute(key, attrs[key]);
  if (text !== undefined) el.textContent = text;
  parent.appendChild(el);
  return el;
}

// Draws a ruler along one axis; the vertical one is the same with the axes swapped.
function ruler(svg, vertical, origin, length, pageCm) {
  const line = (p, a, b) => add(svg, 'path', { d: vertical ? `M${a} ${p}H${b}` : `M${p} ${a}V${b}`, stroke: '#b0b0b0' });
  const end = origin + pageCm * CM;
  const band = (from, to, attrs) => add(svg, 'rect', vertical
    ? { x: 0.5, y: from, width: 16, height: to - from, ...attrs }
    : { x: from, y: 0.5, width: to - from, height: 16, ...attrs });
  const snap = p => Math.floor(p) + 0.5;
  band(origin, end, { fill: '#fff' });
  band(-5, snap(origin), { fill: 'none', stroke: '#b0b0b0' });
  band(snap(end), length + 5, { fill: 'none', stroke: '#b0b0b0' });
  for (let n = -3; n <= pageCm + 3; n++) {
    const p = origin + n * CM;
    const half = snap(p + CM / 2);
    if (half > 1 && half < length) line(half, 4, 12);
    if (n === 0 || p < 6 || p > length - 6) continue;
    line(snap(p), 0, 2);
    line(snap(p), 15, 17);
    add(svg, 'text', vertical
      ? { x: 0, y: 0, transform: `translate(11 ${p}) rotate(-90)`, 'text-anchor': 'middle', fill: '#a8a8a8' }
      : { x: p, y: 11, 'text-anchor': 'middle', fill: '#a8a8a8' }, Math.abs(n));
  }
}

const h = document.getElementById('hruler');
const v = document.getElementById('vruler');
ruler(h, false, 19.500, h.clientWidth - 3, 48);
ruler(v, true, 56, v.clientHeight - 8, 36);
const mark = { fill: '#fff', stroke: '#8a8a8a' };
add(h, 'path', { d: 'M14.500 .5h10v4l-3.500 4 3.500 4v4h-10v-4l3.500-4-3.500-4z', ...mark });
add(h, 'path', { d: 'M936 16.500v-4l5-5 5 5v4z', ...mark });

// Blocks of each slide layout: x, y, width, height, kind (t = title colour, b = body colour).
const T = [6, 7, 52, 8, 't'];
const layouts = [
  [],
  [T, [6, 20, 52, 24, 'b'], [10, 24, 44, 5, 't']],
  [T, [6, 20, 52, 24, 'b']],
  [T, [6, 20, 24, 24, 'b'], [34, 20, 24, 24, 'b']],
  [T],
  [[6, 7, 52, 37, 'b'], [10, 19, 44, 5, 't'], [14, 28, 36, 5, 't']],
  [T, [6, 20, 24, 10, 'b'], [6, 34, 24, 10, 'b'], [34, 20, 24, 24, 'b']],
  [T, [6, 20, 24, 24, 'b'], [34, 20, 24, 10, 'b'], [34, 34, 24, 10, 'b']],
  [T, [6, 20, 52, 10, 'b'], [6, 34, 24, 10, 'b'], [34, 34, 24, 10, 'b']],
  [T, [6, 20, 52, 10, 'b'], [6, 34, 52, 10, 'b']],
  [T, [6, 20, 24, 10, 'b'], [34, 20, 24, 10, 'b'], [6, 34, 24, 10, 'b'], [34, 34, 24, 10, 'b']],
  [T, [6, 20, 14, 10, 'b'], [25, 20, 14, 10, 'b'], [44, 20, 14, 10, 'b'], [6, 34, 14, 10, 'b'], [25, 34, 14, 10, 'b'], [44, 34, 14, 10, 'b']]
];
layouts.forEach((blocks, i) => {
  const button = document.createElement('button');
  button.setAttribute('aria-label', 'Layout ' + (i + 1));
  if (i === 1) button.className = 'picked';
  const svg = add(button, 'svg', { width: 64, height: 51 });
  add(svg, 'rect', { x: 0.5, y: 0.5, width: 63, height: 50, rx: 8, fill: '#e6e6e6', stroke: '#888' });
  for (const [x, y, width, height, kind] of blocks) {
    add(svg, 'rect', { x, y, width, height, rx: kind === 't' && height === 5 ? 2.500 : 3, fill: kind === 't' ? '#8f5bd9' : '#828282' });
  }
  document.getElementById('layouts').appendChild(button);
});
```
